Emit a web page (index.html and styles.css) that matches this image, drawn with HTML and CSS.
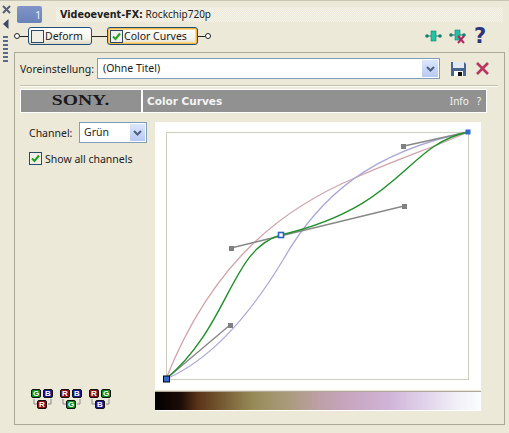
FILE: index.html
```html
<!DOCTYPE html>
<html lang="en">
<head>
    <meta charset="UTF-8">
    <title>Videoevent-FX</title>
    <link rel="stylesheet" href="styles.css">
</head>
<body>
    <div class="rail">
        <svg class="rail-close" width="9" height="9" viewBox="0 0 9 9"><path d="M1 1l7 7M8 1l-7 7" stroke="#55607a" stroke-width="2"/></svg>
        <svg class="rail-arrow" width="6" height="10" viewBox="0 0 6 10"><path d="M5.5 0v10L0 5z" fill="#3d4a66"/></svg>
        <div class="rail-grip"></div>
    </div>
    <div class="main">
        <div class="title-row">
            <div class="track-btn">1</div>
            <div class="title-strip"><strong>Videoevent-FX:</strong> Rockchip720p</div>
        </div>
        <div class="chain-row">
            <span class="pin"></span><span class="wire w-short"></span>
            <div class="fx-btn fx-deform"><span class="check"></span>Deform</div>
            <span class="wire w-mid"></span>
            <div class="fx-btn fx-active"><span class="check on">
                <svg width="11" height="11" viewBox="0 0 11 11"><path d="M2 5.5l2.5 2.5L9 2.5" fill="none" stroke="#21a121" stroke-width="2"/></svg>
            </span>Color Curves</div>
            <span class="wire w-tail"></span><span class="pin"></span>
            <div class="chain-tools">
                <svg width="17" height="12" viewBox="0 0 17 12"><path d="M2 6h13" stroke="#16806f"/><circle cx="2" cy="6" r="1.8" fill="#16806f"/><circle cx="15" cy="6" r="1.8" fill="#16806f"/><rect x="6" y="1" width="5" height="10" fill="#1fc4a4" stroke="#16806f" stroke-width=".6"/></svg>
                <svg width="17" height="15" viewBox="0 0 17 15"><path d="M2 6h13" stroke="#16806f"/><circle cx="2" cy="6" r="1.8" fill="#16806f"/><circle cx="15" cy="6" r="1.8" fill="#16806f"/><rect x="6" y="1" width="5" height="10" fill="#1fc4a4" stroke="#16806f" stroke-width=".6"/><path d="M9 7l6 7M15 7l-6 7" stroke="#b5265f" stroke-width="2"/></svg>
                <span class="help">?</span>
            </div>
        </div>
        <div class="panel">
            <div class="preset-row">
                <label>Voreinstellung:</label>
                <div class="select preset-select">(Ohne Titel)<span class="drop"><svg width="9" height="6" viewBox="0 0 9 6"><path d="M1 1l3.5 3.5L8 1" fill="none" stroke="#4d6185" stroke-width="2"/></svg></span></div>
                <svg class="save-icon" width="15" height="15" viewBox="0 0 15 15"><path d="M0 1h13l2 2v12H0z" fill="#4a6590"/><rect x="2" y="1" width="11" height="6" fill="#e4eaf3"/><rect x="3" y="10" width="9" height="5" fill="#fff"/><rect x="7" y="11" width="4" height="4" fill="#111"/></svg>
                <svg class="del-icon" width="13" height="13" viewBox="0 0 13 13"><path d="M1 1l11 11M12 1L1 12" stroke="#b8355f" stroke-width="2.6"/></svg>
            </div>
            <div class="separator"></div>
            <div class="banner">
                <div class="banner-logo"><span class="sony">SONY.</span></div>
                <div class="banner-title"><strong>Color Curves</strong><span class="banner-info">Info &nbsp;&nbsp;?</span></div>
            </div>
            <div class="content">
                <div class="side">
                    <div class="channel-row">
                        <label>Channel:</label>
                        <div class="select channel-select">Grün<span class="drop"><svg width="9" height="6" viewBox="0 0 9 6"><path d="M1 1l3.5 3.5L8 1" fill="none" stroke="#4d6185" stroke-width="2"/></svg></span></div>
                    </div>
                    <div class="show-row">
                        <span class="check on"><svg width="11" height="11" viewBox="0 0 11 11"><path d="M2 5.5l2.5 2.5L9 2.5" fill="none" stroke="#21a121" stroke-width="2"/></svg></span>Show all channels
                    </div>
                    <div class="swaps">
                        <svg width="23" height="20" viewBox="0 0 23 20">
                            <path d="M3 10v5h3M20 10v5h-3" fill="none" stroke="#888"/>
                            <rect class="k-g" x=".5" y=".5" width="9" height="8" rx="1.5"/><text x="5" y="7.4">G</text>
                            <rect class="k-b" x="12.5" y=".5" width="9" height="8" rx="1.5"/><text x="17" y="7.4">B</text>
                            <rect class="k-r" x="6.5" y="11.5" width="9" height="8" rx="1.5"/><text x="11" y="18.4">R</text>
                        </svg>
                        <svg width="23" height="20" viewBox="0 0 23 20">
                            <path d="M3 10v5h3M20 10v5h-3" fill="none" stroke="#888"/>
                            <rect class="k-r" x=".5" y=".5" width="9" height="8" rx="1.5"/><text x="5" y="7.4">R</text>
                            <rect class="k-b" x="12.5" y=".5" width="9" height="8" rx="1.5"/><text x="17" y="7.4">B</text>
                            <rect class="k-g" x="6.5" y="11.5" width="9" height="8" rx="1.5"/><text x="11" y="18.4">G</text>
                        </svg>
                        <svg width="23" height="20" viewBox="0 0 23 20">
                            <path d="M3 10v5h3M20 10v5h-3" fill="none" stroke="#888"/>
                            <rect class="k-r" x=".5" y=".5" width="9" height="8" rx="1.5"/><text x="5" y="7.4">R</text>
                            <rect class="k-g" x="12.5" y=".5" width="9" height="8" rx="1.5"/><text x="17" y="7.4">G</text>
                            <rect class="k-b" x="6.5" y="11.5" width="9" height="8" rx="1.5"/><text x="11" y="18.4">B</text>
                        </svg>
                    </div>
                </div>
                <div class="graph">
                    <!-- viewBox uses window coordinates of the curve editor -->
                    <svg class="curves" width="326" height="268" viewBox="155 122 326 268">
                        <rect x="166.500" y="132.500" width="302" height="247" fill="none" stroke="#cfccc0"/>
                        <path d="M166 379C215 255 290 205 357 177C400 158 440 145 468 132" fill="none" stroke="#d0a4aa" stroke-width="1.3"/>
                        <path d="M166 379C210 360 248 318 283 260C320 195 372 152 468 132" fill="none" stroke="#aeaad8" stroke-width="1.3"/>
                        <path d="M166 379L230 325M231 248L404 206M404 146L468 132" fill="none" stroke="#888" stroke-width="1.4"/>
                        <path d="M166 379C230 325 231 248 281 235C404 206 404 146 468 132" fill="none" stroke="#1f8f2b" stroke-width="1.4"/>
                        <rect x="228" y="323" width="5" height="5" fill="#808080"/>
                        <rect x="229" y="246" width="5" height="5" fill="#808080"/>
                        <rect x="402" y="204" width="5" height="5" fill="#808080"/>
                        <rect x="401" y="144" width="5" height="5" fill="#808080"/>
                        <rect x="278.500" y="232.500" width="5" height="5" fill="#fff" stroke="#2f62c8" stroke-width="1.6"/>
                        <rect x="163.500" y="376" width="6" height="6" fill="#2f6bd0" stroke="#000"/>
                        <rect x="465.500" y="129.500" width="5" height="5" fill="#2f6bd0"/>
                    </svg>
                    <div class="ramp"></div>
                </div>
            </div>
        </div>
    </div>
</body>
</html>
```
FILE: styles.css
```css
html, body {
    margin: 0;
    padding: 0;
    height: 433px;
    overflow: hidden;
}
body {
    display: flex;
    box-sizing: border-box;
    border-top: 1px solid #c9c5b2;
    background-color: #ece9d8;
    font-family: "Noto Sans", sans-serif;
    font-size: 10.5px;
    color: #222;
}
.rail {
    width: 14px;
    flex: none;
    display: flex;
    flex-direction: column;
    align-items: center;
    padding-top: 4px;
}
.rail-close {
    margin-left: -2px;
}
.rail-arrow {
    margin: 5px 0 0 -2px;
}
.rail-grip {
    width: 5px;
    height: 26px;
    margin: 7px 0 0 -3px;
    background: repeating-linear-gradient(#5a6a8a 0 2px, transparent 2px 4px);
}
.main {
    width: 491px;
    flex: none;
}
.title-row {
    display: flex;
    align-items: center;
    height: 18px;
    margin-top: 4px;
    margin-left: 3px;
}
.track-btn {
    width: 25px;
    height: 17px;
    box-sizing: border-box;
    padding-left: 18px;
    line-height: 17px;
    border-radius: 2px;
    background: linear-gradient(#8096c8, #6a82b8);
    color: #e8eeff;
    font-size: 11px;
}
.title-strip {
    width: 447px;
    height: 15px;
    margin-left: 14px;
    padding-left: 4px;
    box-sizing: border-box;
    line-height: 15px;
    font-size: 10px;
    background: repeating-conic-gradient(#f6f4ea 0 25%, #ece9d8 0 50%) 0 0 / 2px 2px;
    white-space: nowrap;
}
.title-strip strong {
    font-family: "DejaVu Sans", sans-serif;
    font-size: 9.6px;
}
.chain-row {
    display: flex;
    align-items: center;
    height: 18px;
    margin-top: 4px;
}
.pin {
    width: 4px;
    height: 4px;
    flex: none;
    border: 1px solid #222;
    border-radius: 50%;
    background: #fff;
}
.wire {
    height: 1px;
    flex: none;
    background: #222;
}
.w-short { width: 8px; }
.w-mid { width: 15px; }
.w-tail { width: 7px; }
.fx-btn {
    display: flex;
    align-items: center;
    gap: 1px;
    height: 18px;
    box-sizing: border-box;
    padding-left: 2px;
    border: 1px solid #1f4e79;
    border-radius: 3px;
    background: linear-gradient(#fff, #f4f2e8 70%, #dcd8c4);
    white-space: nowrap;
}
.fx-deform {
    width: 64px;
}
.fx-active {
    width: 91px;
    box-shadow: inset 0 0 0 1px #f5b840, inset 0 0 0 2px #fbd88e;
}
.check {
    width: 13px;
    height: 13px;
    flex: none;
    box-sizing: border-box;
    display: inline-flex;
    align-items: center;
    justify-content: center;
    border: 1px solid #2a4a6a;
    background: #f1efe6;
}
.chain-tools {
    display: flex;
    align-items: center;
    gap: 7px;
    margin-left: 214px;
}
.help {
    width: 12px;
    margin-left: 1px;
    font-family: "DejaVu Sans", sans-serif;
    font-size: 21px;
    font-weight: bold;
    line-height: 18px;
    color: #2d3478;
}
.panel {
    width: 491px;
    height: 373px;
    box-sizing: border-box;
    margin-top: 7px;
    padding: 5px 5px 0 5px;
    border: 1px solid #aca899;
}
.preset-row {
    display: flex;
    align-items: center;
    height: 21px;
}
.preset-row label {
    width: 77px;
    flex: none;
}
.select {
    position: relative;
    box-sizing: border-box;
    border: 1px solid #7f9db9;
    background: #fff;
    padding-left: 5px;
    white-space: nowrap;
}
.preset-select {
    width: 343px;
    height: 21px;
    line-height: 18px;
}
.drop {
    position: absolute;
    top: 1px;
    right: 1px;
    bottom: 1px;
    width: 16px;
    display: flex;
    align-items: center;
    justify-content: center;
    background: linear-gradient(#dce6fb, #b7c9f2);
}
.save-icon {
    margin-left: 11px;
}
.del-icon {
    margin-left: 10px;
}
.separator {
    height: 1px;
    margin-top: 6px;
    background: #c5c1ae;
    width: 478px;
    border-bottom: 1px solid #fbfaf4;
}
.banner {
    display: flex;
    width: 467px;
    height: 24px;
    box-sizing: border-box;
    margin-top: 2px;
    border: 1px solid #fff;
    background: #919191;
}
.banner-logo {
    width: 122px;
    flex: none;
    box-sizing: border-box;
    border-right: 2px solid #fff;
    text-align: center;
    line-height: 22px;
}
.sony {
    display: inline-block;
    transform: scaleX(1.4);
    font-family: "Liberation Serif", serif;
    font-size: 14px;
    font-weight: bold;
    color: #1a1a1a;
}
.banner-title {
    flex: 1;
    display: flex;
    justify-content: space-between;
    padding: 0 5px 0 4px;
    line-height: 22px;
    color: #f4f4f4;
}
.banner-title strong {
    font-family: "DejaVu Sans", sans-serif;
    font-size: 10.5px;
}
.banner-info {
    font-size: 10px;
}
.content {
    display: flex;
    margin-top: 9px;
}
.side {
    width: 135px;
    flex: none;
}
.channel-row {
    display: flex;
    align-items: center;
    height: 21px;
    padding-left: 9px;
}
.channel-row label {
    width: 50px;
    flex: none;
}
.channel-select {
    width: 68px;
    height: 21px;
    line-height: 18px;
    padding-left: 4px;
}
.channel-select .drop {
    width: 15px;
}
.show-row {
    display: flex;
    align-items: center;
    gap: 3px;
    height: 13px;
    margin-top: 9px;
    padding-left: 9px;
}
.swaps {
    display: flex;
    gap: 6px;
    margin-top: 224px;
    padding-left: 11px;
}
.swaps rect {
    stroke: #111;
    stroke-width: 1;
}
.k-g { fill: #0f8a1e; }
.k-b { fill: #14148c; }
.k-r { fill: #8c1018; }
.swaps text {
    fill: #fff;
    font-family: "Liberation Sans", sans-serif;
    font-size: 8px;
    font-weight: bold;
    text-anchor: middle;
}
.graph {
    width: 326px;
    flex: none;
}
.curves {
    display: block;
    background: #fff;
}
.ramp {
    height: 18px;
    margin-top: 1px;
    border-top: 1px solid #aca899;
    border-bottom: 1px solid #fff;
    background: linear-gradient(90deg, #000 0, #1d0d07 8%, #5a3318 13%, #7c6238 22%, #968a58 30%, #a99a78 40%, #bca0a4 50%, #c6a4bc 58%, #d0b4d8 72%, #e0d0e8 82%, #f0eef6 92%, #fbfdff 100%);
}
```
